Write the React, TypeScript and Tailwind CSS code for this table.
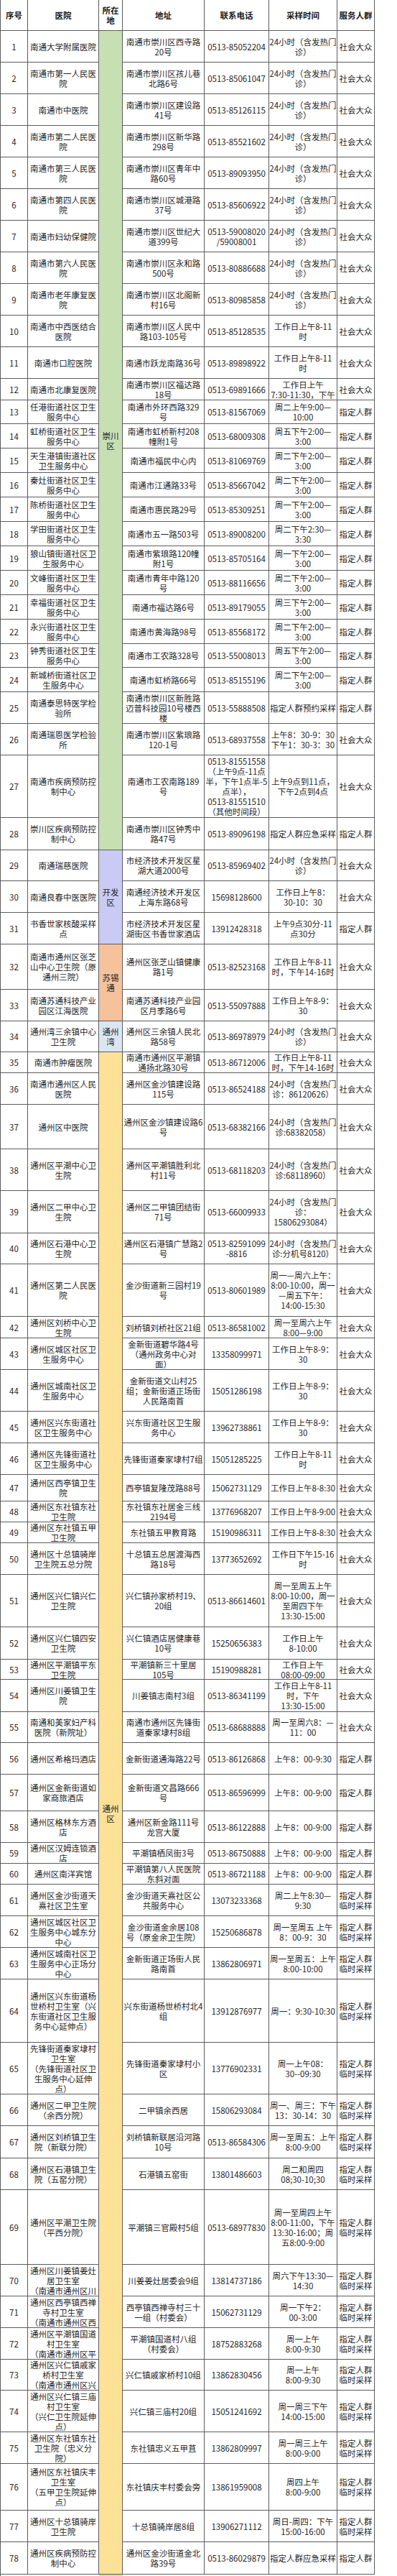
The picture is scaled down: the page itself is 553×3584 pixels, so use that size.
import React from 'react';

// [height, 医院, 地址, 联系电话, 采样时间, 服务人群]
type Row = [number, string, string, string, string, string];

const T24 = '24小时（含发热门\n诊）';
const SH = '社会大众';
const ZD = '指定人群';
const ZL = '指定人群\n临时采样';

const rows: Row[] = [
  [44, '南通大学附属医院', '南通市崇川区西寺路\n20号', '0513-85052204', T24, SH],
  [44, '南通市第一人民医\n院', '南通市崇川区孩儿巷\n北路6号', '0513-85061047', T24, SH],
  [44, '南通市中医院', '南通市崇川区建设路\n41号', '0513-85126115', T24, SH],
  [44, '南通市第二人民医\n院', '南通市崇川区新华路\n298号', '0513-85521602', T24, SH],
  [44, '南通市第三人民医\n院', '南通市崇川区青年中\n路60号', '0513-89093950', T24, SH],
  [44, '南通市第四人民医\n院', '南通市崇川区城港路\n37号', '0513-85606922', T24, SH],
  [44, '南通市妇幼保健院', '南通市崇川区世纪大\n道399号', '0513-59008020\n/59008001', T24, SH],
  [44, '南通市第六人民医\n院', '南通市崇川区永和路\n500号', '0513-80886688', T24, SH],
  [44, '南通市老年康复医\n院', '南通市崇川区北阁新\n村16号', '0513-80985858', T24, SH],
  [44, '南通市中西医结合\n医院', '南通市崇川区人民中\n路103-105号', '0513-85128535', '工作日上午8-11\n时', SH],
  [44, '南通市口腔医院', '南通市跃龙南路36号', '0513-89898922', '工作日上午8-11\n时', SH],
  [30, '南通市北康复医院', '南通市崇川区福达路\n18号', '0513-69891666', '工作日上午\n7:30-11:30，下午', SH],
  [33, '任港街道社区卫生\n服务中心', '南通市外环西路329\n号', '0513-81567069', '周二上午9:00—\n10:00', ZD],
  [34, '虹桥街道社区卫生\n服务中心', '南通市虹桥新村208\n幢附1号', '0513-68009308', '周五下午2:00—\n3:00', ZD],
  [34, '天生港镇街道社区\n卫生服务中心', '南通市福民中心内', '0513-81069769', '周二下午2:00—\n3:00', ZD],
  [34, '秦灶街道社区卫生\n服务中心', '南通市江通路33号', '0513-85667042', '周二下午2:00—\n3:00', ZD],
  [34, '陈桥街道社区卫生\n服务中心', '南通市惠民路29号', '0513-85309251', '周一下午2:00—\n3:00', ZD],
  [34, '学田街道社区卫生\n服务中心', '南通市五一路503号', '0513-89008200', '周二下午2:30—\n3:30', ZD],
  [34, '狼山镇街道社区卫\n生服务中心', '南通市紫琅路120幢\n附1号', '0513-85705164', '周一下午2:00—\n3:00', ZD],
  [34, '文峰街道社区卫生\n服务中心', '南通市青年中路120\n号', '0513-88116656', '周二下午2:00—\n3:00', ZD],
  [34, '幸福街道社区卫生\n服务中心', '南通市福达路6号', '0513-89179055', '周三下午2:00—\n3:00', ZD],
  [34, '永兴街道社区卫生\n服务中心', '南通市黄海路98号', '0513-85568172', '周二下午2:00—\n3:00', ZD],
  [33, '钟秀街道社区卫生\n服务中心', '南通市工农路328号', '0513-55008013', '周五下午2:00—\n3:00', ZD],
  [34, '新城桥街道社区卫\n生服务中心', '南通市虹桥路66号', '0513-85155196', '周二下午2:00—\n3:00', ZD],
  [44, '南通泰思特医学检\n验所', '南通市崇川区新胜路\n迈普科技园10号楼西\n楼', '0513-55888508', '指定人群预约采样', ZD],
  [44, '南通瑞恩医学检验\n所', '南通市崇川区紫琅路\n120-1号', '0513-68937558', '上午8：30-9：30\n下午1：30-3：30', SH],
  [87, '南通市疾病预防控\n制中心', '南通市工农南路189\n号', '0513-81551558\n（上午9点-11点\n半，下午1点半-5\n点半），\n0513-81551510\n（其他时间段）', '上午9点到11点，\n下午2点到4点', SH],
  [45, '崇川区疾病预防控\n制中心', '南通市崇川区钟秀中\n路47号', '0513-89096198', '指定人群应急采样', ZD],
  [43, '南通瑞慈医院', '市经济技术开发区星\n湖大道2000号', '0513-85969402', T24, SH],
  [44, '南通良春中医医院', '南通经济技术开发区\n上海东路68号', '15698128600', '工作日上午8：\n30-10：30', SH],
  [44, '书香世家核酸采样\n点', '市经济技术开发区星\n湖街区书香世家酒店', '13912428318', '上午9点30分-11\n点30分', ZD],
  [63, '南通市通州区张芝\n山中心卫生院（原\n通州三院）', '通州区张芝山镇健康\n路1号', '0513-82523168', '工作日上午8-11\n时，下午14-16时', SH],
  [44, '南通苏通科技产业\n园区江海医院', '南通苏通科技产业园\n区月季路6号', '0513-55097888', '工作日上午8-9：\n30', SH],
  [43, '通州湾三余镇中心\n卫生院', '通州区三余镇人民北\n路58号', '0513-86978979', T24, SH],
  [29, '南通市肿瘤医院', '南通市通州区平潮镇\n通扬北路30号', '0513-86712006', '工作日上午8-11\n时，下午14-16时', SH],
  [44, '南通市通州区人民\n医院', '通州区金沙镇建设路\n115号', '0513-86524188', '24小时（含发热门\n诊：86120626）', SH],
  [62, '通州区中医院', '通州区金沙镇建设路6\n号', '0513-68382166', '24小时（含发热门\n诊:68382058）', SH],
  [58, '通州区平潮中心卫\n生院', '通州区平潮镇胜利北\n村11号', '0513-68118203', '24小时（含发热门\n诊:68118960）', SH],
  [59, '通州区二甲中心卫\n生院', '通州区二甲镇团结街\n71号', '0513-66009933', '24小时（含发热门\n诊：\n15806293084）', SH],
  [43, '通州区石港中心卫\n生院', '通州区石港镇广慧路2\n号', '0513-82591099\n-8816', '24小时（含发热门\n诊:分机号8120）', SH],
  [73, '通州区第二人民医\n院', '金沙街道新三园村19\n号', '0513-80601989', '周一—周六上午：\n8:00-10:00，周一\n—周五下午：\n14:00-15:30', SH],
  [30, '通州区刘桥中心卫\n生院', '刘桥镇刘桥社区21组', '0513-86581002', '周一至周六上午\n8:00—9:00', SH],
  [44, '通州区城区社区卫\n生服务中心', '金新街道碧华路4号\n（通州政务中心对\n面）', '13358099971', '工作日上午8-9：\n30', SH],
  [58, '通州区城南社区卫\n生服务中心', '金新街道文山村25\n组；金新街道正场街\n人民路南首', '15051286198', '工作日上午8-9：\n30', SH],
  [44, '通州区兴东街道社\n区卫生服务中心', '兴东街道社区卫生服\n务中心', '13962738861', '工作日上午8-9：\n30', SH],
  [44, '通州区先锋街道社\n区卫生服务中心', '先锋街道秦家埭村7组', '15051285225', '工作日上午8-11\n时', SH],
  [37, '通州区西亭镇卫生\n院', '西亭镇复隆茂路88号', '15062731129', '工作日上午8-8:30', SH],
  [29, '通州区东社镇东社\n卫生院', '东社镇东社居金三线\n2194号', '13776968207', '工作日上午8-9:00', SH],
  [29, '通州区东社镇五甲\n卫生院', '东社镇五甲教育路', '15190986311', '工作日上午8-8:30', SH],
  [44, '通州区十总镇骑岸\n卫生院五总分院', '十总镇五总居渡海西\n路18号', '13773652692', '工作日下午15-16\n时', SH],
  [73, '通州区兴仁镇兴仁\n卫生院', '兴仁镇孙家桥村19、\n20组', '0513-86614601', '周一至周五上午\n8:00-10:00，周一\n至周四下午\n13:30-15:00', SH],
  [45, '通州区兴仁镇四安\n卫生院', '兴仁镇酒店居健康巷\n10号', '15250656383', '工作日上午\n8-10:00', SH],
  [28, '通州区平潮镇平东\n卫生院', '平潮镇新三十里居\n105号', '15190988281', '工作日上午\n08:00-09:00', SH],
  [45, '通州区川姜镇卫生\n院', '川姜镇志南村3组', '0513-86341199', '工作日上午8-11\n时，下午\n13:30-15:00', SH],
  [43, '南通和美家妇产科\n医院（新院址）', '南通市通州区先锋街\n道秦家埭村8组', '0513-68688888', '周一至周六8：—\n11：00', SH],
  [44, '通州区希格玛酒店', '金新街道通海路22号', '0513-86126868', '上午8：00-9:30', ZD],
  [51, '通州区金新街道如\n家商旅酒店', '金新街道文昌路666\n号', '0513-86596999', '上午8：00-9:00', ZD],
  [44, '通州区格林东方酒\n店', '通州区新金路111号\n龙宫大厦', '0513-86122888', '上午8：00-9:00', ZD],
  [29, '通州区汉姆连锁酒\n店', '平潮镇栖凤街3号', '0513-86750888', '上午8：00-9:00', ZD],
  [29, '通州区南洋宾馆', '平潮镇第八人民医院\n东斜对面', '0513-86721188', '上午8：00-9:00', ZD],
  [44, '通州区金沙街道天\n熹社区卫生室', '金沙街道天熹社区公\n共服务中心', '13073233368', '周二上午8:30—\n9:30', ZL],
  [44, '通州区城区社区卫\n生服务中心城东分\n中心', '金沙街道金余居108\n号（原金余卫生院）', '15250686878', '周一至周五 上午\n8：00-9：30', ZL],
  [44, '通州区城南社区卫\n生服务中心正场分\n中心', '金新街道正场街人民\n路南首', '13862806971', '周一至周五：上午\n8:00-10:00', ZL],
  [88, '通州区兴东街道杨\n世桥村卫生室（兴\n东街道社区卫生服\n务中心延伸点）', '兴东街道杨世桥村北4\n组', '13912876977', '周一：9:30-10:30', ZL],
  [72, '先锋街道秦家埭村\n卫生室\n（先锋街道社区卫\n生服务中心延伸\n点）', '先锋街道秦家埭村小\n区', '13776902331', '周一上午08：\n30--09:30', ZL],
  [44, '通州区二甲卫生院\n（余西分院）', '二甲镇余西居', '15806293084', '周一、周三：下午\n13：30-14：30', ZL],
  [45, '通州区刘桥镇卫生\n院（新联分院）', '刘桥镇新联居沿河路\n10号', '0513-86584306', '周一至周五：上午\n8:00-9:00', ZL],
  [44, '通州区石港镇卫生\n院（五窑分院）', '石港镇五窑街', '13801486603', '周二和周四\n08;30-10;30', ZL],
  [104, '通州区平潮卫生院\n（平西分院）', '平潮镇三官殿村5组', '0513-68977830', '周一至周四上午\n8:00-11:00，下午\n13:30-16:00；周\n五8:00-9:00', ZL],
  [44, '通州区川姜镇姜灶\n居卫生室\n（南通市通州区川', '川姜姜灶居委会9组', '13814737186', '周六下午13:30—\n14:30', ZL],
  [44, '通州区西亭镇西禅\n寺村卫生室\n（南通市通州区西', '西亭镇西禅寺村三十\n一组（村委会）', '15062731129', '周一下午2：\n00-3:00', ZL],
  [44, '通州区平潮镇国道\n村卫生室\n（南通市通州区平', '平潮镇国道村八组\n（村委会）', '18752883268', '周一上午\n8:00-9:30', ZL],
  [43, '通州区兴仁镇戚家\n桥村卫生室\n（南通市通州区兴', '兴仁镇戚家桥村10组', '13862830456', '周一上午\n8:00-9:30', ZL],
  [58, '通州区兴仁镇三庙\n村卫生室\n（兴仁卫生院延伸\n点）', '兴仁镇三庙村20组', '15051241692', '周一周三下午\n14:00-15:00', ZL],
  [44, '通州区东社镇东社\n卫生院（忠义分\n院）', '东社镇忠义五甲苴', '13862809997', '周一周三上午\n8:00-9:00', ZL],
  [65, '通州区东社镇庆丰\n卫生室\n（五甲卫生院延伸\n点）', '东社镇庆丰村委会旁', '13861959008', '周四上午\n8:00-9:00', ZL],
  [44, '通州区十总镇骑岸\n卫生院', '十总镇骑岸居8组', '13906271112', '周日-周四：下午\n15:00-16:00', ZL],
  [45, '通州区疾病预防控\n制中心', '通州区金沙街道金北\n路39号', '0513-86029879', '指定人群应急采样', ZD],
];

// merged 所在地 cells, by data row (1-based, inclusive)
const regions = [
  { name: '崇川\n区', from: 1, to: 28, bg: 'bg-[#c6e0b4]' },
  { name: '开发\n区', from: 29, to: 31, bg: 'bg-[#c9cbf5]' },
  { name: '苏锡\n通', from: 32, to: 33, bg: 'bg-[#f5c29c]' },
  { name: '通州\n湾', from: 34, to: 34, bg: 'bg-[#dce6f2]' },
  { name: '通州\n区', from: 35, to: 78, bg: 'bg-[#fce197]' },
];

const headers = ['序号', '医院', '所在\n地', '地址', '联系电话', '采样时间', '服务人群'];

const Cell: React.FC<{ text: string; bold?: boolean }> = ({ text, bold }) => (
  <div className="flex flex-col items-center [justify-content:safe_center] overflow-hidden border-r border-b border-[#5c5c5c]">
    <div className={`whitespace-pre text-center ${bold ? 'font-bold text-[#1a1a1a]' : ''}`}>{text}</div>
  </div>
);

export default function App() {
  const template = ['43px', ...rows.map((r) => `${r[0]}px`), '2px'].join(' ');

  return (
    <div className="w-[553px] min-h-[3584px] bg-white font-['Noto_Sans_CJK_SC','Noto_Sans',sans-serif] text-[11.5px] leading-[14px] text-[#262626]">
      <div
        className="grid w-max grid-cols-[38px_99px_33px_114px_90px_95px_52px] border-l border-[#5c5c5c]"
        style={{ gridTemplateRows: template }}
      >
        {headers.map((h) => (
          <Cell key={h} text={h} bold />
        ))}

        {regions.map((g) => (
          <div
            key={g.name}
            className={`col-start-3 flex items-center justify-center border-r border-b border-[#5c5c5c] ${g.bg}`}
            style={{ gridRow: `${g.from + 1} / ${g.to + 2}` }}
          >
            <div className="whitespace-pre text-center">{g.name}</div>
          </div>
        ))}
        <div className="col-start-3 bg-[#c6e0b4]" style={{ gridRow: `${rows.length + 2} / ${rows.length + 3}` }} />

        {rows.map((r, i) => (
          <React.Fragment key={i}>
            <Cell text={String(i + 1)} />
            <Cell text={r[1]} />
            <Cell text={r[2]} />
            <Cell text={r[3]} />
            <Cell text={r[4]} />
            <Cell text={r[5]} />
          </React.Fragment>
        ))}
      </div>
    </div>
  );
}
